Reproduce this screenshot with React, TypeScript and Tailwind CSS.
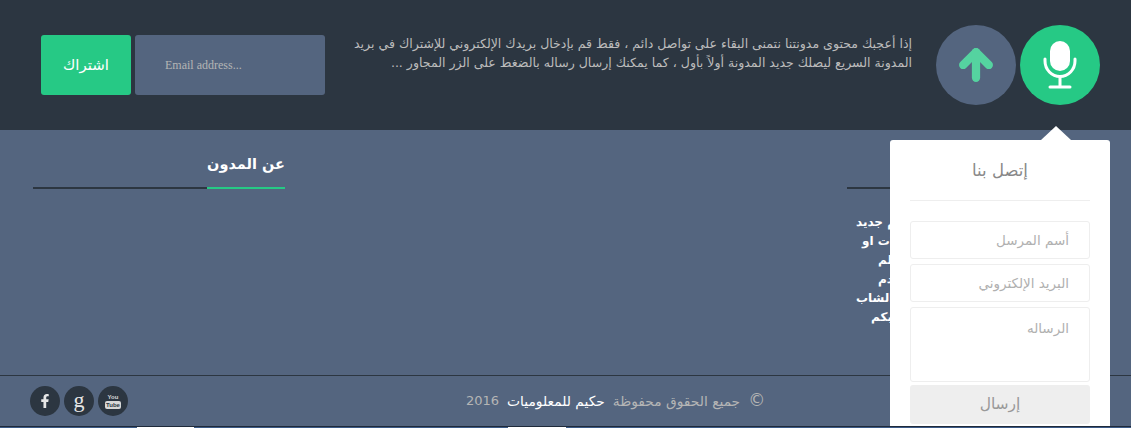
import { ArrowUp } from "lucide-react";
import { FaFacebookF } from "react-icons/fa";

const arabic = { fontFamily: '"DejaVu Sans", sans-serif' };

function Mic() {
  return (
    <svg viewBox="0 0 34 48" className="w-[34px] h-[48px]" fill="none">
      <rect x="7" y="0" width="20" height="30" rx="10" fill="#fff" />
      <path d="M2 18v2a15 15.500 0 0 0 30 0v-2" stroke="#fff" strokeWidth="3" strokeLinecap="round" />
      <path d="M17 36v10M7 46h20" stroke="#fff" strokeWidth="3" strokeLinecap="round" />
    </svg>
  );
}

function SectionTitle({ title }: { title?: string }) {
  return (
    <div className="h-[59px] border-b-2 border-[#2c3641] flex justify-end">
      {title && (
        <h3 className="h-[59px] -mb-[2px] border-b-2 border-[#26c985] pt-[24px] text-[14.5px] leading-[20px] font-bold text-white">
          {title}
        </h3>
      )}
    </div>
  );
}

export default function App() {
  return (
    <div className="relative w-[1131px] h-[428px] overflow-hidden bg-[#54657f] flex flex-col" style={arabic}>
      <div className="h-[130px] bg-[#2c3641] flex items-start pt-[25px] pl-[41px]">
        <button className="mt-[10px] w-[90px] h-[60px] rounded-[3px] bg-[#26c985] text-white text-[15px]">اشتراك</button>
        <div className="mt-[10px] ml-[4px] w-[190px] h-[60px] rounded-[3px] bg-[#54657f] pl-[30px] flex items-center text-[12px] text-[#b5b5b5] font-['Liberation_Serif',serif]">
          Email address...
        </div>
        <p dir="rtl" className="mt-[9px] ml-[25px] w-[562px] text-[12.55px] leading-[19px] text-[#bcbcbc]">
          إذا أعجبك محتوى مدونتنا نتمنى البقاء على تواصل دائم ، فقط قم بإدخال بريدك الإلكتروني للإشتراك في بريد المدونة السريع ليصلك جديد المدونة أولاً بأول ، كما يمكنك إرسال رساله بالضغط على الزر المجاور ...
        </p>
        <div className="ml-[24px] w-[80px] h-[80px] rounded-full bg-[#54657f] flex items-center justify-center text-[#55d3a0]">
          <ArrowUp size={44} strokeWidth={4.5} />
        </div>
        <div className="ml-[4px] w-[80px] h-[80px] rounded-full bg-[#26c985] flex items-center justify-center">
          <Mic />
        </div>
      </div>

      <div className="h-[245px] flex px-[33px] justify-between">
        <div className="w-[252px]">
          <SectionTitle title="عن المدون" />
        </div>
        <div className="w-[252px] mr-[-1px]">
          <SectionTitle />
          <p dir="rtl" className="mt-[24px] text-[12px] leading-[19px] text-white font-bold text-left pl-[9px]">
            <span className="block">م جديد</span>
            <span className="block pl-[6px]">لات او</span>
            <span className="block pl-[22px]">لم</span>
            <span className="block pl-[22px]">دم</span>
            <span className="block">ا الشاب</span>
            <span className="block pl-[15px]">بكم</span>
          </p>
        </div>
      </div>

      <div className="h-[51px] border-t border-[#2c3641] flex items-center">
        <div className="ml-[30px] flex gap-[4px]">
          <span className="w-[30px] h-[30px] rounded-full bg-[#2c3641] text-[#e6e6e6] flex items-center justify-center">
            <FaFacebookF size={14} />
          </span>
          <span className="w-[30px] h-[30px] rounded-full bg-[#2c3641] text-[#e6e6e6] flex items-center justify-center pb-[3px] font-['Liberation_Serif',serif] text-[22px] leading-none">
            g
          </span>
          <span className="w-[30px] h-[30px] rounded-full bg-[#2c3641] text-[#d8d8d8] flex flex-col items-center justify-center font-['Liberation_Sans',sans-serif] font-bold leading-none">
            <span className="text-[6px] h-[7px]">You</span>
            <span className="text-[6px] h-[8px] px-[1px] rounded-[2px] bg-[#d8d8d8] text-[#2c3641] flex items-center">Tube</span>
          </span>
        </div>
        <p dir="rtl" className="ml-[338px] text-[13.8px] text-[#b5b5b5] whitespace-nowrap flex items-center">
          <span className="text-[17px] ml-[8px]">©</span>
          <span>جميع الحقوق محفوظة</span>
          <span className="text-white mx-[8px]">حكيم للمعلوميات</span>
          <span className="text-[13px]">2016</span>
        </p>
      </div>

      <div className="relative h-[2px] bg-[#3b5a86] border-t border-[#1f2a3a]">
        <div className="absolute left-[137px] top-0 w-[57px] h-[1px] bg-white" />
        <div className="absolute left-[508px] top-0 w-[58px] h-[1px] bg-white" />
      </div>

      <div className="absolute left-[890px] top-[140px] w-[220px] h-[286px] bg-white rounded-t-[3px] px-[20px]" dir="rtl">
        <div className="absolute -top-[14px] left-[151px] w-0 h-0 border-x-[15px] border-x-transparent border-b-[14px] border-b-white" />
        <div className="h-[61px] border-b border-[#eeeeee] pt-[21px] text-center text-[16.5px] leading-[20px] text-[#888]">إتصل بنا</div>
        <div className="mt-[20px] h-[38px] border border-[#eeeeee] rounded-[3px] px-[20px] flex items-center text-[13.5px] text-[#b0b0b0]">أسم المرسل</div>
        <div className="mt-[5px] h-[38px] border border-[#eeeeee] rounded-[3px] px-[20px] flex items-center text-[13.5px] text-[#b0b0b0]">البريد الإلكتروني</div>
        <div className="mt-[5px] h-[75px] border border-[#eeeeee] rounded-[3px] px-[20px] pt-[10px] text-[13.5px] text-[#b0b0b0]">الرساله</div>
        <div className="mt-[3px] h-[39px] bg-[#eeeeee] rounded-[3px] flex items-center justify-center text-[15.5px] text-[#999]">إرسال</div>
      </div>
    </div>
  );
}
